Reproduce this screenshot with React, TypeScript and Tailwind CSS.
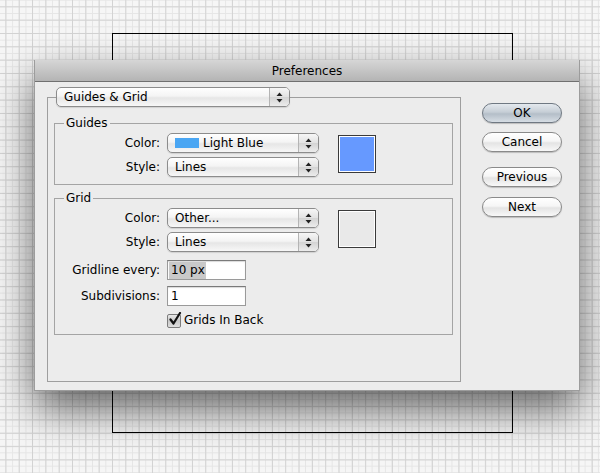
import * as React from "react";

const font = "font-['DejaVu_Sans',sans-serif]";

function Arrows() {
  return (
    <svg width="7" height="11" viewBox="0 0 7 11" className="block">
      <path d="M3.5 0.5 L6.5 4 L0.5 4 Z" fill="#222" />
      <path d="M3.5 10.5 L6.5 7 L0.5 7 Z" fill="#222" />
    </svg>
  );
}

function Popup({
  width,
  children,
}: {
  width: string;
  children: React.ReactNode;
}) {
  return (
    <div
      className={`${width} flex h-[20px] items-stretch overflow-hidden rounded-[5px] border border-[#8c8c8c] bg-[linear-gradient(to_bottom,#ffffff_0%,#f4f4f4_45%,#e6e6e6_55%,#f7f7f7_100%)] shadow-[0_1px_1px_rgba(0,0,0,0.12)]`}
    >
      <div className="flex flex-1 items-center gap-[4px] pl-[7px] text-[12px] leading-[18px] text-black">
        {children}
      </div>
      <div className="flex w-[20px] items-center justify-center border-l border-[#b4b4b4] bg-[linear-gradient(to_bottom,#f6f6f6_0%,#e2e2e2_50%,#d4d4d4_52%,#ececec_100%)]">
        <Arrows />
      </div>
    </div>
  );
}

function Row({ label, children }: { label: string; children: React.ReactNode }) {
  return (
    <div className="flex items-center">
      <span className="w-[105px] text-right text-[12px] leading-[16px] text-black">
        {label}
      </span>
      <div className="ml-[7px]">{children}</div>
    </div>
  );
}

function TextField({ value, selected }: { value: string; selected?: boolean }) {
  return (
    <div className="flex h-[20px] w-[79px] items-center border border-[#9a9a9a] border-t-[#7a7a7a] bg-white pl-[1px] shadow-[inset_0_1px_1px_rgba(0,0,0,0.15)]">
      <span
        className={`pl-[2px] pr-[1px] text-[12px] leading-[17px] text-black ${
          selected ? "bg-[#c9c9c9]" : ""
        }`}
      >
        {value}
      </span>
    </div>
  );
}

function Swatch({ color }: { color: string }) {
  return (
    <div className="h-[38px] w-[38px] border border-[#3a3a3a] bg-white p-[1px]">
      <div className={`h-full w-full ${color}`} />
    </div>
  );
}

function PillButton({
  label,
  primary,
}: {
  label: string;
  primary?: boolean;
}) {
  return (
    <button
      className={`flex h-[20px] w-[80px] items-center justify-center rounded-full border text-[12px] leading-[18px] text-black shadow-[0_1px_1px_rgba(0,0,0,0.2)] ${
        primary
          ? "border-[#6f7882] bg-[linear-gradient(to_bottom,#e4e9ee_0%,#c6ced6_45%,#b4bec8_55%,#d6dde4_100%)]"
          : "border-[#8a8a8a] bg-[linear-gradient(to_bottom,#ffffff_0%,#f6f6f6_45%,#e4e4e4_55%,#f8f8f8_100%)]"
      }`}
    >
      {label}
    </button>
  );
}

function Checkbox() {
  return (
    <div className="relative h-[14px] w-[14px] rounded-[2px] border border-[#7c7c7c] bg-[linear-gradient(to_bottom,#e8e8e8_0%,#c8c8c8_50%,#dedede_100%)]">
      <svg
        width="14"
        height="14"
        viewBox="0 0 14 14"
        className="absolute left-[0px] top-[-3px]"
      >
        <path
          d="M2.5 7.5 L5.5 11.5 L12 1"
          stroke="#111"
          strokeWidth="2.2"
          fill="none"
          strokeLinecap="round"
          strokeLinejoin="round"
        />
      </svg>
    </div>
  );
}

export default function App() {
  return (
    <div
      className={`relative h-[473px] w-[600px] overflow-hidden bg-[#f6f6f6] bg-[linear-gradient(to_right,#d3d3d3_1px,transparent_1px),linear-gradient(to_bottom,#d3d3d3_1px,transparent_1px),linear-gradient(to_right,#e6e6e6_1px,transparent_1px),linear-gradient(to_bottom,#e6e6e6_1px,transparent_1px)] bg-[size:13.333px_13.333px,13.333px_13.333px,6.667px_6.667px,6.667px_6.667px] bg-[position:112px_33px] ${font}`}
    >
      {/* document bounds */}
      <div className="absolute left-[112px] top-[33px] h-[400px] w-[401px] border border-black" />

      {/* preferences window */}
      <div className="absolute left-[34px] top-[60px] flex h-[331px] w-[546px] flex-col border-x border-b border-[#9c9c9c] bg-[#ececec] shadow-[0_18px_40px_rgba(0,0,0,0.6)]">
        <div className="flex h-[22px] items-center justify-center border-b border-[#707070] bg-[linear-gradient(to_bottom,#d6d6d6_0%,#b4b4b4_100%)] text-[12px] text-black">
          Preferences
        </div>

        <div className="flex flex-1">
          <div className="pl-[12px] pt-[5px]">
            <fieldset className="h-[295px] w-[414px] border border-[#9e9e9e] px-[6px]">
              <legend className="ml-[2px]">
                <Popup width="w-[234px]">
                  <span className="text-[12px]">Guides &amp; Grid</span>
                </Popup>
              </legend>

              <fieldset className="mt-[8px] w-[399px] border border-[#a4a4a4] pb-[7px] pt-[2px]">
                <legend className="ml-[9px] px-[2px] text-[12px] leading-[16px] text-black">
                  Guides
                </legend>
                <div className="flex">
                  <div className="flex flex-col gap-[4px]">
                    <Row label="Color:">
                      <Popup width="w-[152px]">
                        <span className="h-[10px] w-[24px] bg-[#4aa6f3]" />
                        <span>Light Blue</span>
                      </Popup>
                    </Row>
                    <Row label="Style:">
                      <Popup width="w-[152px]">
                        <span>Lines</span>
                      </Popup>
                    </Row>
                  </div>
                  <div className="ml-[19px] mt-[2px]">
                    <Swatch color="bg-[#6699ff]" />
                  </div>
                </div>
              </fieldset>

              <fieldset className="mt-[5px] w-[399px] border border-[#a4a4a4] pb-[6px] pt-[2px]">
                <legend className="ml-[9px] px-[2px] text-[12px] leading-[16px] text-black">
                  Grid
                </legend>
                <div className="flex">
                  <div className="flex flex-col">
                    <Row label="Color:">
                      <Popup width="w-[152px]">
                        <span>Other...</span>
                      </Popup>
                    </Row>
                    <div className="mt-[4px]">
                      <Row label="Style:">
                        <Popup width="w-[152px]">
                          <span>Lines</span>
                        </Popup>
                      </Row>
                    </div>
                    <div className="mt-[8px]">
                      <Row label="Gridline every:">
                        <TextField value="10 px" selected />
                      </Row>
                    </div>
                    <div className="mt-[6px]">
                      <Row label="Subdivisions:">
                        <TextField value="1" />
                      </Row>
                    </div>
                    <div className="mt-[7px] flex items-center pl-[112px]">
                      <Checkbox />
                      <span className="ml-[3px] text-[12px] leading-[15px] text-black">
                        Grids In Back
                      </span>
                    </div>
                  </div>
                  <div className="ml-[19px] mt-[2px]">
                    <Swatch color="bg-[#e9e9e9]" />
                  </div>
                </div>
              </fieldset>
            </fieldset>
          </div>

          <div className="ml-[21px] flex flex-col pt-[21px]">
            <PillButton label="OK" primary />
            <div className="mt-[9px]">
              <PillButton label="Cancel" />
            </div>
            <div className="mt-[15px]">
              <PillButton label="Previous" />
            </div>
            <div className="mt-[10px]">
              <PillButton label="Next" />
            </div>
          </div>
        </div>
      </div>
    </div>
  );
}
